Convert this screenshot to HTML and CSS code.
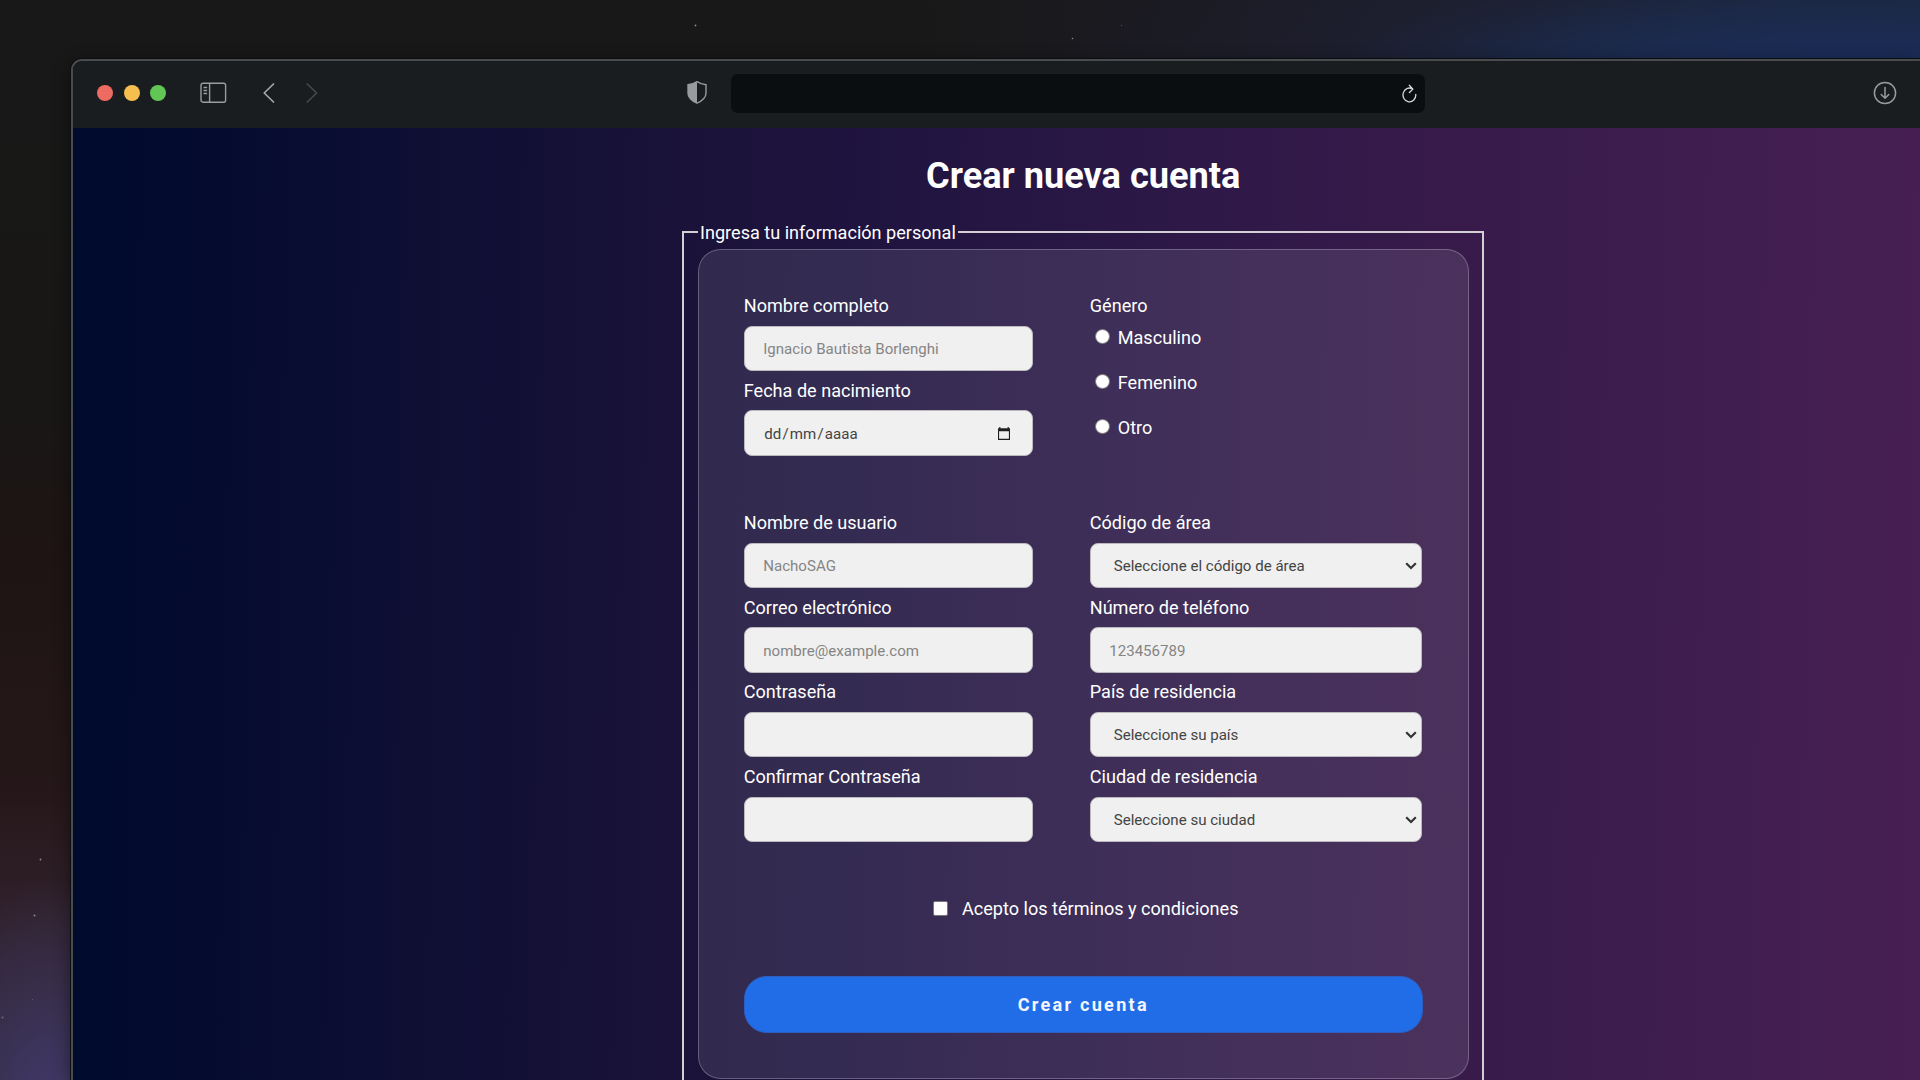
FILE: index.html
```html
<!DOCTYPE html>
<html lang="es">
<head>
<meta charset="utf-8">
<title>Crear nueva cuenta</title>
<link rel="stylesheet" href="styles.css">
</head>
<body>
<svg class="stars" viewBox="0 0 1920 1080" fill="#8d8790">
  <circle cx="695.5" cy="25.5" r=".9"/><circle cx="1072.5" cy="38.5" r=".8"/><circle cx="1121.5" cy="25.5" r=".6" opacity=".6"/>
  <circle cx="40.5" cy="859.5" r=".9"/><circle cx="34.5" cy="915.5" r="1"/><circle cx="2.5" cy="1017.5" r="1" opacity=".7"/><circle cx="32.5" cy="999.5" r=".6" opacity=".5"/>
</svg>
<div class="window">
  <header class="toolbar">
    <div class="lights"><i class="light red"></i><i class="light yellow"></i><i class="light green"></i></div>
    <svg class="icon sidebar" width="27" height="22" viewBox="0 0 27 22" fill="none" stroke="#9a9d9f" stroke-width="1.4"><rect x="1" y="1.2" width="24.6" height="19" rx="2"/><path d="M9.6 1.2v19M3.5 5.5h3.6M3.5 8.5h3.6M3.5 11.5h3.6"/></svg>
    <svg class="icon back" width="12" height="20" viewBox="0 0 12 20" fill="none" stroke="#a3a6a8" stroke-width="1.7" stroke-linecap="round" stroke-linejoin="round"><path d="M10.5 1 1.2 10l9.3 9"/></svg>
    <svg class="icon forward" width="12" height="20" viewBox="0 0 12 20" fill="none" stroke="#45494b" stroke-width="1.7" stroke-linecap="round" stroke-linejoin="round"><path d="m1.3 1 9.3 9-9.3 9"/></svg>
    <svg class="icon shield" width="20" height="23" viewBox="0 0 20 23"><path d="M10 .7C7.5 2.3 4.5 3.3 1 3.7V12c0 4.8 3.7 7.8 9 10.2 5.3-2.4 9-5.4 9-10.2V3.7C15.5 3.3 12.5 2.3 10 .7Z" fill="none" stroke="#989b9d" stroke-width="1.4"/><path d="M10 .7C7.5 2.3 4.5 3.3 1 3.7V12c0 4.8 3.7 7.8 9 10.2Z" fill="#989b9d"/></svg>
    <div class="address">
      <svg width="15" height="19" viewBox="0 0 15 19" fill="none" stroke="#d6d8d9" stroke-width="1.3" stroke-linecap="round" stroke-linejoin="round"><path d="M13.8 10.5A6.4 6.9 0 1 1 10.8 5.1M7.3 1.3l3.6 3.8-3.5 3.4"/></svg>
    </div>
    <svg class="icon download" width="24" height="24" viewBox="0 0 24 24" fill="none" stroke="#989b9d" stroke-width="1.5" stroke-linecap="round" stroke-linejoin="round"><circle cx="12" cy="12" r="10.6"/><path d="M12 6.5v10.6M8.2 13.5l3.8 3.7 3.8-3.7"/></svg>
  </header>
  <main class="page">
    <h1 class="title">Crear nueva cuenta</h1>
    <fieldset class="personal">
      <legend class="legend">Ingresa tu información personal</legend>
      <form class="panel">
        <div class="columns">
          <div class="column">
            <label class="field"><span class="label">Nombre completo</span><input class="control" placeholder="Ignacio Bautista Borlenghi"></label>
            <div class="field"><span class="label">Fecha de nacimiento</span>
              <div class="control date"><span>dd<b>/</b>mm<b>/</b>aaaa</span>
                <svg width="12" height="13" viewBox="0 0 13 14"><path d="M2.6 0v1.2h7.8V0h1.3v1.2H13V14H0V1.2h1.3V0zM1.2 4.5v8.3h10.6V4.5z" fill="#202020" fill-rule="evenodd"/></svg>
              </div>
            </div>
          </div>
          <div class="column">
            <span class="label">Género</span>
            <div class="choices">
              <div class="choice"><i class="radio"></i><span>Masculino</span></div>
              <div class="choice"><i class="radio"></i><span>Femenino</span></div>
              <div class="choice"><i class="radio"></i><span>Otro</span></div>
            </div>
          </div>
        </div>
        <div class="columns">
          <div class="column">
            <label class="field"><span class="label">Nombre de usuario</span><input class="control" placeholder="NachoSAG"></label>
            <label class="field"><span class="label">Correo electrónico</span><input class="control" placeholder="nombre@example.com"></label>
            <label class="field"><span class="label">Contraseña</span><input class="control" type="password"></label>
            <label class="field"><span class="label">Confirmar Contraseña</span><input class="control" type="password"></label>
          </div>
          <div class="column">
            <div class="field"><span class="label">Código de área</span><div class="control select"><span>Seleccione el código de área</span><svg class="chevron" viewBox="0 0 12 8"><path d="m1.2 1.3 4.8 4.7 4.8-4.7"/></svg></div></div>
            <label class="field"><span class="label">Número de teléfono</span><input class="control" placeholder="123456789"></label>
            <div class="field"><span class="label">País de residencia</span><div class="control select"><span>Seleccione su país</span><svg class="chevron" viewBox="0 0 12 8"><path d="m1.2 1.3 4.8 4.7 4.8-4.7"/></svg></div></div>
            <div class="field"><span class="label">Ciudad de residencia</span><div class="control select"><span>Seleccione su ciudad</span><svg class="chevron" viewBox="0 0 12 8"><path d="m1.2 1.3 4.8 4.7 4.8-4.7"/></svg></div></div>
          </div>
        </div>
        <div class="terms"><i class="checkbox"></i><span>Acepto los términos y condiciones</span></div>
        <button class="submit" type="button">Crear cuenta</button>
      </form>
    </fieldset>
  </main>
</div>
</body>
</html>
```
FILE: styles.css
```css
* { box-sizing: border-box; }

body {
  margin: 0;
  width: 1920px;
  height: 1080px;
  overflow: hidden;
  padding: 59px 0 0 71px;
  font-family: Roboto, sans-serif;
  font-size: 18.08px;
  line-height: 21.3px;
  color: #fff;
  background:
    radial-gradient(ellipse 800px 160px at 1850px 75px, #1b2c5a 0%, rgba(27, 44, 84, .85) 30%, rgba(30, 32, 56, .35) 65%, rgba(30, 26, 36, 0) 100%),
    radial-gradient(ellipse 130px 230px at 50px 1110px, #41396a 0%, rgba(60, 52, 88, .65) 50%, rgba(50, 35, 50, 0) 100%),
    linear-gradient(90deg, rgba(30, 26, 36, 0) 900px, rgba(30, 29, 42, .8) 1300px, rgba(28, 40, 58, .9) 1800px) 0 0 / 100% 60px no-repeat,
    linear-gradient(180deg, #181818 0, #181716 400px, #1e1413 560px, #26181a 800px, #30212c 920px, #322b43 1080px);
}

.stars {
  position: absolute;
  inset: 0;
  width: 1920px;
  height: 1080px;
}

.window {
  position: relative;
  width: 1849px;
  height: 1021px;
  border: 2px solid #484c4f;
  border-width: 2px 0 0 2px;
  border-radius: 11px 0 0 0;
  overflow: hidden;
  box-shadow: 0 0 0 1px #0c0d10, 0 4px 18px rgba(0, 0, 0, .45);
}

.toolbar {
  display: flex;
  align-items: center;
  height: 67px;
  padding: 0 0 4px 24px;
  background: #1a1d1f;
}

.icon { flex: none; }
.lights { display: flex; gap: 10.6px; }
.light { width: 16px; height: 16px; border-radius: 50%; }
.red { background: #ed6b60; }
.yellow { background: #f5be4f; }
.green { background: #62c655; }
.sidebar { margin-left: 33.8px; }
.back { margin-left: 36px; }
.forward { margin-left: 31.5px; }
.shield { margin-left: 368.5px; }

.address {
  display: flex;
  flex: none;
  align-items: center;
  justify-content: flex-end;
  width: 694px;
  height: 39px;
  margin: 2px 0 0 24px;
  padding-right: 8px;
  border-radius: 7px;
  background: #0a0e10;
}

.download { margin-left: 448px; }

.page {
  display: flex;
  flex-direction: column;
  align-items: center;
  height: 952px;
  padding: 27px 0 0 173.5px;
  background: linear-gradient(91deg, #000b2d 0, #030b2f 5%, #1a1239 30%, #201440 40%, #2c1847 53%, #361a4a 66%, #3d1d4e 77%, #471f53 91%, #4a2054 100%) 0 0 / 2022px 100%;
}

.title {
  margin: 0 0 24.5px;
  font-size: 36.16px;
  line-height: 42px;
  font-weight: 700;
}

.personal {
  width: 802px;
  height: 859px;
  margin: 0;
  padding: 6.2px 13.5px 0;
  border: 2px solid #d4cfd3;
  border-bottom: 0;
}

.legend { padding: 0 2.3px; }

.panel {
  display: flex;
  flex-direction: column;
  height: 830px;
  padding: 45px;
  border: 1px solid rgba(255, 255, 255, .25);
  border-radius: 22.6px;
  background: rgba(250, 255, 255, .1);
}

.columns {
  display: grid;
  grid-template-columns: 289.5px 332.5px;
  column-gap: 56.5px;
  margin-bottom: 47.5px;
}

.field {
  display: flex;
  flex-direction: column;
  height: 84.75px;
}

.label { display: block; }

.control {
  display: flex;
  align-items: center;
  width: 100%;
  height: 45.2px;
  margin: 9.4px 0 0;
  padding: 1px 18.5px 0;
  border: 1px solid #bcb9be;
  border-radius: 8px;
  background: #f0f0f0;
  color: #444;
  font: 15.07px/18px Roboto, sans-serif;
}

.control::placeholder { color: #858585; opacity: 1; }

.date { justify-content: space-between; padding-right: 22px; padding-left: 19.5px; letter-spacing: .1px; }
.date b { margin: 0 1px; font-weight: 400; }

.select { justify-content: space-between; padding: 1px 4px 0 23px; }

.chevron {
  width: 12px;
  height: 8px;
  fill: none;
  stroke: #333;
  stroke-width: 2.2;
}

.choices { padding-top: 10.8px; }

.choice {
  display: flex;
  height: 45.1px;
  padding-left: 5px;
}

.radio {
  width: 15px;
  height: 15px;
  margin: 2px 8px 0 0;
  border: 1px solid #777;
  border-radius: 50%;
  background: #fff;
}

.terms {
  display: flex;
  justify-content: center;
  gap: 14px;
  padding-left: 5px;
}

.checkbox {
  width: 15px;
  height: 15px;
  margin-top: 3px;
  border: 1px solid #777;
  border-radius: 2px;
  background: #fff;
}

.submit {
  flex: none;
  height: 57px;
  margin: 56px 0 0;
  padding: 0;
  border: 1px solid #2d5fc0;
  border-radius: 22.6px;
  background: #216de8;
  color: #f4f7ff;
  font: 700 18.08px/21px Roboto, sans-serif;
  letter-spacing: 2.26px;
}
```
